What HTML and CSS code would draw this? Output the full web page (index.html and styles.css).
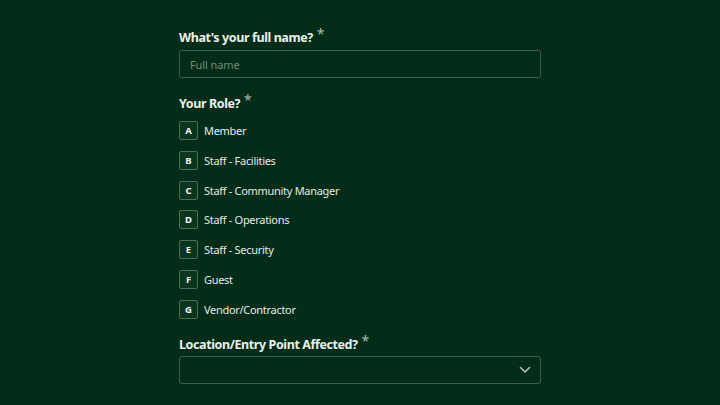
FILE: index.html
```html
<!DOCTYPE html>
<html>
<head>
<meta charset="utf-8">
<link rel="stylesheet" href="styles.css">
</head>
<body>
<main class="form">
  <section class="field">
    <h2 class="label">What's your full name? <span class="req">*</span></h2>
    <div class="input"><span class="placeholder">Full name</span></div>
  </section>
  <section class="field">
    <h2 class="label">Your Role? <span class="req">*</span></h2>
    <ul class="choices">
      <li class="choice"><span class="key">A</span><span>Member</span></li>
      <li class="choice"><span class="key">B</span><span>Staff - Facilities</span></li>
      <li class="choice"><span class="key">C</span><span>Staff - Community Manager</span></li>
      <li class="choice"><span class="key">D</span><span>Staff - Operations</span></li>
      <li class="choice"><span class="key">E</span><span>Staff - Security</span></li>
      <li class="choice"><span class="key">F</span><span>Guest</span></li>
      <li class="choice"><span class="key">G</span><span>Vendor/Contractor</span></li>
    </ul>
  </section>
  <section class="field loc">
    <h2 class="label">Location/Entry Point Affected? <span class="req">*</span></h2>
    <div class="input select">
      <svg class="chev" width="12" height="8" viewBox="0 0 12 8"><path d="M1.5 1.5 L6 6 L10.5 1.5" fill="none" stroke="#a9c4b3" stroke-width="1.6" stroke-linecap="round" stroke-linejoin="round"/></svg>
    </div>
  </section>
  <section class="field next">
    <h2 class="label">Date and time of the issue? <span class="req">*</span></h2>
  </section>
</main>
</body>
</html>
```
FILE: styles.css
```css
html, body {
  margin: 0;
  padding: 0;
  background: #032d18;
  font-family: "Noto Sans", "Open Sans", sans-serif;
  color: #e8efe9;
}
.form {
  width: 362px;
  margin: 0 auto;
  padding-top: 28px;
  display: flex;
  flex-direction: column;
  gap: 16px;
}
.field {
  display: flex;
  flex-direction: column;
}
.loc .label {
  margin-bottom: 2px;
}
.next {
  margin-top: 5px;
}
.label {
  margin: 0 0 3px 0;
  font-size: 12.5px;
  font-weight: 700;
  line-height: 18px;
  color: #eaf0ec;
  letter-spacing: -0.4px;
}
.req {
  color: #a7bcae;
  font-size: 14px;
  font-weight: 400;
  position: relative;
  top: -3px;
  margin-left: 1px;
}
.input {
  height: 26px;
  border: 1px solid #3d5e48;
  border-radius: 3px;
  display: flex;
  align-items: center;
  padding: 0 10px;
}
.placeholder {
  font-size: 11px;
  color: #6f8f7b;
  letter-spacing: -0.1px;
}
.select {
  justify-content: flex-end;
  padding-right: 9px;
}
.choices {
  list-style: none;
  margin: 5px 0 0 0;
  padding: 0;
  display: flex;
  flex-direction: column;
  gap: 10.8px;
}
.choice {
  display: flex;
  align-items: center;
  gap: 6px;
  font-size: 11px;
  color: #e4ece6;
  height: 19px;
  letter-spacing: -0.3px;
}
.key {
  width: 17px;
  height: 17px;
  border: 1px solid #4f6e59;
  border-radius: 2px;
  background: #0a3620;
  display: flex;
  align-items: center;
  justify-content: center;
  font-size: 9.5px;
  font-weight: 700;
  color: #f2f6f3;
  letter-spacing: 0;
}
```
